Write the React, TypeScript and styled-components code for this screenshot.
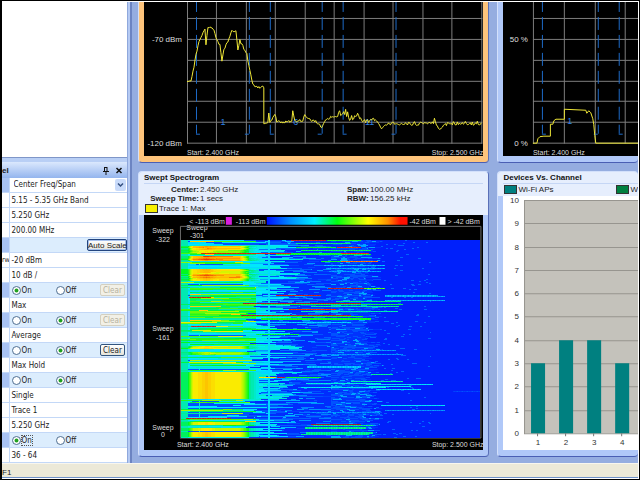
import React from "react";
import styled, { createGlobalStyle, css } from "styled-components";

const GlobalStyle = createGlobalStyle`
  * { box-sizing: border-box; }
  html, body, #root { height: 100%; }
  body {
    margin: 0;
    overflow: hidden;
    background: #000;
    color: #222;
    font-family: "Liberation Sans", Arial, sans-serif;
    font-size: 8px;
  }
`;

/* ---------- Window frame ---------- */

const Screen = styled.div`
  display: flex;
  flex-direction: column;
  height: 100vh;
  padding: 1px 1px 1px 2px;
  background: #000;
`;

const Desktop = styled.div`
  flex: 1;
  min-height: 0;
  display: flex;
  flex-direction: column;
  border-top: 1px solid #fff;
  border-right: 1px solid #fff;
  border-bottom: 1px solid #fff;
  background: #95ade0;
`;

const Workspace = styled.div`
  flex: 1;
  min-height: 0;
  display: flex;
`;

const StatusBar = styled.footer`
  height: 15px;
  padding-top: 3px;
  background: #ece9d8;
  border-top: 1px solid #f8f6ee;
  border-bottom: 1px solid #6d90c8;
  line-height: 12px;
  font-size: 8px;
`;

/* ---------- Control panel ---------- */

const SideBar = styled.aside`
  width: 125px;
  display: flex;
  flex-direction: column;
`;

const EmptyView = styled.div`
  flex: 1;
  background: #fff;
  border-bottom: 1px solid #7f96c8;
`;

const Splitter = styled.div`
  width: 5px;
  background: #b5caf3;
  border-left: 1px solid #8fa8dc;
  border-right: 2px solid #6c84c2;
`;

const PanelBar = styled.header`
  display: flex;
  align-items: center;
  justify-content: space-between;
  height: 20px;
  padding: 1px 4px 0 0;
  border-top: 4px solid #b9cff5;
  background: linear-gradient(#dbe8fd, #94b5ee);
  font-weight: bold;
`;

const BarButtons = styled.div`
  display: flex;
  gap: 5px;
`;

const IconButton = styled.button`
  display: block;
  width: 8px;
  height: 9px;
  padding: 0;
  border: 0;
  background: none;
  svg { display: block; }
`;

const panelFont = css`
  font-family: "DejaVu Sans Condensed", "Noto Sans", sans-serif;
  font-size: 8px;
`;

const PropertyTable = styled.table`
  width: 100%;
  border-collapse: collapse;
  background: #fff;
  table-layout: fixed;
  ${panelFont}
`;

const rowTones = {
  plain: css`background: #fff;`,
  active: css`background: #dcedfd;`,
};

const PropertyRow = styled.tr<{ $tone: "plain" | "active" }>`
  height: 15px;
  ${(p) => rowTones[p.$tone]}
`;

const StubCell = styled.th<{ $filled: boolean }>`
  width: 7px;
  padding: 0;
  overflow: hidden;
  border-bottom: 1px solid #c3d8f7;
  border-right: 1px solid #c3d8f7;
  background: ${(p) => (p.$filled ? "#a9c3f3" : "#fff")};
  font-weight: normal;
  font-size: 7px;
  line-height: 10px;
`;

const ValueCell = styled.td`
  height: 15px;
  padding: 0 0 0 2px;
  border-bottom: 1px solid #c3d8f7;
  line-height: 13px;
  white-space: nowrap;
`;

const Controls = styled.div`
  display: flex;
  align-items: center;
  padding-right: 2px;
  line-height: 13px;
`;

const RadioLabel = styled.label<{ $focused?: boolean }>`
  display: flex;
  flex: none;
  align-items: center;
  gap: 1px;
  width: 44px;
  span { ${(p) => p.$focused && css`outline: 1px dotted #555;`} line-height: 9px; }
`;

const Radio = styled.input`
  appearance: none;
  width: 9px;
  height: 9px;
  margin: 0;
  border: 1px solid #4f6f92;
  border-radius: 50%;
  background: #fff;
  &:checked { background: radial-gradient(circle, #21a121 0 30%, #fff 48%); }
`;

const SmallButton = styled.button`
  height: 12px;
  width: 25px;
  margin-left: auto;
  padding: 0;
  border: 1px solid #33557f;
  border-radius: 2px;
  background: linear-gradient(#fff, #e6e4da);
  color: #222;
  ${panelFont}
  line-height: 9px;
  text-align: center;
  white-space: nowrap;
  &:disabled { border-color: #d4d0c0; background: #f2f0e6; color: #b5b1a0; }
`;

const ScaleButton = styled(SmallButton)`
  width: 40px;
  margin-right: -2px;
  border-color: #23457f;
  box-shadow: inset 0 0 0 1px #a8c2ee;
  font-family: "Liberation Sans", Arial, sans-serif;
`;

const SelectBox = styled.div`
  display: grid;
  grid-template-columns: 1fr 11px;
  align-items: center;
  padding-right: 1px;
`;

const Select = styled.select`
  grid-area: 1 / 1 / 2 / 3;
  appearance: none;
  width: 100%;
  height: 13px;
  padding: 0 0 0 2px;
  border: 0;
  background: #fff;
  color: #222;
  ${panelFont}
`;

const Arrow = styled.svg`
  grid-area: 1 / 2 / 2 / 3;
  pointer-events: none;
  background: #c9dbfa;
  border-radius: 2px;
`;

/* ---------- Measurement panels ---------- */

const Views = styled.main`
  flex: 1;
  min-width: 0;
  display: grid;
  grid-template-columns: minmax(0, 5fr) minmax(0, 2fr);
  grid-template-rows: minmax(0, 161fr) minmax(0, 287fr);
  gap: 8px;
  padding: 0 0 6px 6px;
`;

const Panel = styled.section<{ $selected?: boolean; $place?: "top" | "right" | "corner" }>`
  display: flex;
  flex-direction: column;
  min-width: 0;
  min-height: 0;
  border-style: solid;
  border-width: ${(p) => (p.$place === "top" || p.$place === "corner" ? "0" : "1px")}
    ${(p) => (p.$place === "right" || p.$place === "corner" ? "0" : "1px")} 1px 1px;
  border-color: #d3e0fb #5a70b8 #4a5fb4 #d3e0fb;
  border-radius: ${(p) => (p.$place === "top" || p.$place === "corner" ? "0 0 4px 4px" : "4px")};
  padding: 0 ${(p) => (p.$place === "right" || p.$place === "corner" ? 0 : 5)}px 6px 5px;
  background: ${(p) => (p.$selected ? "#fdc47c" : "#b0c8f8")};
  overflow: hidden;
`;

const PanelHead = styled.header`
  margin: 0 -5px 0 -5px;
  padding: 0 5px;
  background: #e6eefd;
`;

const Title = styled.h2`
  margin: 0;
  height: 12px;
  border-bottom: 1px solid #c5d6f5;
  font-size: 8px;
  line-height: 11px;
  color: #111;
`;

const Readings = styled.dl`
  display: grid;
  grid-template-columns: 55px 148px 22px 1fr;
  margin: 0;
  padding-top: 1px;
  line-height: 9px;
  dt { font-weight: bold; text-align: right; white-space: nowrap; }
  dt:nth-of-type(even) { text-align: left; }
  dd { margin: 0; padding-left: 1px; white-space: nowrap; }
`;

const Legend = styled.ul`
  display: flex;
  align-items: center;
  justify-content: space-between;
  height: 12px;
  margin: 0;
  padding: 0 0 0 1px;
  list-style: none;
`;

const LegendItem = styled.li<{ $color: string }>`
  display: flex;
  align-items: center;
  gap: 1px;
  white-space: nowrap;
  &::before {
    content: "";
    width: 11px;
    height: 7px;
    border: 1px solid #333;
    background: ${(p) => p.$color};
  }
`;

const Chart = styled.svg<{ $light?: boolean }>`
  display: block;
  flex: 1;
  width: 100%;
  min-height: 0;
  background: ${(p) => (p.$light ? "#fff" : "#000")};
  font-family: "Liberation Sans", Arial, sans-serif;
  font-size: 8px;
  fill: #dedede;
`;

/* ---------- Chart data ---------- */

const makeRandom = (seed: number) => () => {
  seed = (seed * 1664525 + 1013904223) >>> 0;
  return seed / 4294967296;
};

const gridRows = [18, 39, 60, 81, 101, 122, 143];

const noisyTrace = (knots: [number, number, number][]) => {
  const rnd = makeRandom(11);
  let d = "";
  for (let i = 0; i < knots.length - 1; i++) {
    const [x0, y0, noise] = knots[i];
    const [x1, y1] = knots[i + 1];
    for (let x = x0; x < x1; x += 1) {
      const y = y0 + ((y1 - y0) * (x - x0)) / (x1 - x0) + (rnd() - 0.5) * noise;
      d += `${d ? "L" : "M"}${x} ${y.toFixed(1)}`;
    }
    if (x0 === x1) d += `L${x0} ${y0}`;
  }
  const last = knots[knots.length - 1];
  return `${d}L${last[0]} ${last[1]}`;
};

const powerTrace = noisyTrace([
  [187, 82, 0.6], [191, 81, 1], [194, 67, 2], [196, 55, 2], [199, 42, 2], [203, 33, 3], [205, 29, 1],
  [206, 45, 1], [208, 27, 2], [213, 29, 3], [217, 39, 3], [220, 45, 1], [222, 61, 1], [224, 50, 2],
  [228, 41, 3], [231, 32, 4], [236, 31, 2], [238, 50, 1], [240, 41, 3], [244, 49, 3], [247, 54, 2],
  [249, 66, 1], [253, 85, 3], [258, 88, 4], [264, 88, 0], [264, 124, 0], [268, 123, 1], [269, 113, 1],
  [270, 123, 2], [275, 114, 2], [277, 122, 3], [292, 122, 2], [293, 111, 1], [295, 121, 3], [303, 121, 2],
  [305, 115, 1], [308, 120, 3], [316, 121, 3], [322, 128, 1], [326, 120, 5], [331, 118, 6], [337, 115, 8],
  [346, 113, 8], [351, 118, 5], [357, 117, 3], [358, 113, 1], [360, 119, 4], [366, 122, 3], [374, 120, 4],
  [379, 124, 1], [382, 129, 1], [387, 124, 3], [410, 124, 4], [434, 123, 2], [435, 119, 1], [437, 125, 1],
  [440, 130, 1], [446, 124, 4], [462, 123, 4], [471, 124, 4], [482, 123, 0],
]);

const WIDTH = 300;
const HEIGHT = 198;

const heat: [number, number[]][] = [
  [0, [0, 26, 250]], [0.12, [0, 62, 255]], [0.22, [0, 140, 255]], [0.33, [0, 232, 255]],
  [0.42, [0, 235, 150]], [0.5, [0, 250, 30]], [0.6, [165, 250, 0]], [0.68, [250, 240, 0]],
  [0.8, [255, 165, 0]], [0.9, [230, 50, 10]], [1, [150, 25, 60]],
];

const heatColor = (v: number) => {
  const i = Math.max(1, heat.findIndex(([s]) => s >= v));
  const [s0, a] = heat[i - 1];
  const [s1, b] = heat[i];
  const t = (v - s0) / (s1 - s0);
  return `rgb(${a.map((c, k) => Math.round(c + (b[k] - c) * t)).join(",")})`;
};

/* Sweeps with strong activity: first row, last row, level of the busy band. */
const bursts: [number, number, number][] = [
  [6, 9, 0.76], [10, 12, 0.62], [16, 20, 0.8], [29, 33, 0.7], [34, 37, 0.8], [38, 40, 0.7],
  [106, 108, 0.68], [112, 114, 0.6], [132, 158, 0.7], [182, 184, 0.66], [188, 190, 0.64], [192, 196, 0.7],
];

/* Single streaks: row, start, end, level, thickness. */
const streaks: [number, number, number, number, number][] = [
  [0, 110, 145, 0.95, 1], [0, 146, 180, 0.5, 1], [3, 115, 170, 0.44, 1], [7, 115, 155, 0.5, 1],
  [7, 156, 180, 0.9, 1], [10, 120, 190, 0.45, 1], [13, 20, 110, 0.92, 1], [13, 110, 160, 0.5, 1],
  [14, 95, 190, 0.48, 1], [13, 160, 188, 0.9, 1], [21, 140, 160, 0.5, 1], [21, 160, 197, 0.84, 1],
  [25, 143, 204, 0.28, 1], [28, 145, 204, 0.26, 1], [31, 148, 200, 0.24, 1], [48, 147, 183, 0.95, 1],
  [48, 183, 204, 0.55, 1], [55, 204, 258, 0.26, 1], [56, 204, 265, 0.24, 1], [60, 204, 265, 0.26, 1],
  [55, 95, 140, 0.95, 1], [57, 8, 30, 0.95, 1], [61, 155, 220, 0.44, 1], [63, 62, 180, 0.98, 1],
  [64, 80, 222, 0.46, 1], [66, 130, 218, 0.42, 1], [69, 108, 155, 0.9, 1], [71, 120, 217, 0.4, 1],
  [75, 60, 170, 0.97, 1], [76, 60, 182, 0.5, 1], [78, 80, 190, 0.5, 2], [82, 85, 170, 0.3, 1],
  [89, 60, 130, 0.5, 1], [94, 75, 118, 0.48, 1], [86, 10, 35, 0.93, 1], [110, 157, 215, 0.22, 1],
  [114, 140, 222, 0.22, 1], [126, 126, 180, 0.28, 2], [137, 78, 95, 0.7, 1], [137, 96, 104, 0.95, 1],
  [137, 105, 140, 0.5, 1], [144, 185, 252, 0.32, 1], [149, 195, 240, 0.3, 1], [141, 170, 222, 0.4, 1],
  [146, 188, 230, 0.34, 1], [134, 190, 212, 0.42, 1], [143, 125, 200, 0.36, 1], [147, 120, 205, 0.34, 1],
  [151, 273, 300, 0.12, 1], [165, 200, 265, 0.32, 1], [170, 204, 265, 0.22, 1], [172, 130, 198, 0.22, 1],
  [178, 5, 50, 0.95, 1], [184, 130, 180, 1, 1], [185, 132, 192, 0.43, 1], [187, 124, 185, 0.43, 2],
  [192, 125, 192, 0.42, 2], [194, 120, 188, 0.43, 1],
];

const buildSpectrogram = () => {
  const rnd = makeRandom(42);
  const paths = new Map<number, string>();
  for (let y = 0; y < HEIGHT; y++) {
    const burst = bursts.find(([a, b]) => y >= a && y <= b);
    const busy = (y > 54 && y < 82) || rnd() < 0.22;
    const sparse = y < 5 || (y > 160 && y < 182);
    const rowTone = rnd();
    const rowLift = (rnd() - 0.5) * 0.16;
    const reach = (burst ? 76 : 64) + rnd() * 46;
    const tail = 182 + rnd() * 20;
    const row: number[] = [];
    let jitter = 0;
    let left = 0;
    for (let x = 0; x < WIDTH; x++) {
      if (left-- <= 0) {
        jitter = rnd();
        left = x < 90 ? 6 + rnd() * 36 : x < 150 ? 1 + rnd() * 14 : x < 200 ? rnd() * 5 : rnd() * 2;
      }
      let v: number;
      if (burst && x < 78) {
        const top = burst[2] - 0.02;
        v = x < 6 ? 0.46 : x < 12 ? 0.46 + ((x - 6) / 6) * (top - 0.46)
          : x < 58 ? top : x < 68 ? top - ((x - 58) / 10) * (top - 0.48) : 0.42 - (x - 68) * 0.008;
        if (x > 14 && x < 36) v += 0.07 * (1 - Math.abs(x - 25) / 11);
        if (y < 120) v += (jitter - 0.5) * 0.1;
      } else if (x < reach) {
        v = 0.34 + (jitter - 0.5) * 0.07;
        if (busy && x > 8 && x < 75) v = jitter > 0.95 ? 0.72 : 0.44 + rowLift + jitter * 0.12;
        else if (rowTone > 0.78 && x < 62) v = 0.4 + jitter * 0.28;
        else if ((sparse || rowTone < 0.14) && jitter > 0.45) v = 0.14;
        if (x < 7) v = Math.max(v, 0.4);
      } else if (x < 150) {
        const fade = Math.max(0, 1 - (x - 62) / 84);
        v = jitter < 0.3 + fade * 0.4 ? 0.12 + jitter * 0.34 : 0.07;
      } else if (x < tail) {
        v = jitter > 0.9 ? 0.24 : jitter > 0.5 ? 0.15 : 0.08;
      } else {
        v = jitter > 0.965 && x < 250 ? 0.16 : 0.02;
      }
      if (x === 18 && v < 0.4) v = 0.36;
      if (x === 87 || x === 88) v = 0.32;
      row.push(v);
    }
    for (const [sy, a, b, level, size] of streaks) {
      if (y >= sy && y < sy + size) {
        for (let x = a; x < b; x++) row[x] = Math.min(1, level + (((x * 7) % 5) - 2) * 0.012);
      }
    }
    let start = 0;
    for (let x = 1; x <= WIDTH; x++) {
      const level = Math.round(row[start] * 48);
      if (x === WIDTH || Math.round(row[x] * 48) !== level) {
        paths.set(level, `${paths.get(level) ?? ""}M${start} ${y}h${x - start}v1h${start - x}z`);
        start = x;
      }
    }
  }
  return [...paths.entries()];
};

const spectrogram = buildSpectrogram();

const ChannelMark = ({ x, foot }: { x: number; foot: number }) => (
  <g stroke="#1d6ac8" fill="none">
    <path d={`M${x + 0.5} 2V134`} strokeDasharray="13 5" strokeDashoffset="3" />
    <path d={`M${x} 134.5h${foot}`} />
  </g>
);

const Grid = ({ xs, left, right }: { xs: number[]; left: number; right: number }) => (
  <path
    fill="none"
    stroke="#7d7d7d"
    d={xs.map((x) => `M${x + 0.5} 2V144`).join("") + gridRows.map((y) => `M${left} ${y + 0.5}H${right}`).join("")}
  />
);

const PowerChart = () => (
  <Chart viewBox="144 2 340 154" role="img" aria-label="Power spectrum">
    <Grid xs={[187, 216, 246, 275, 305, 334, 364, 393, 423, 452, 482]} left={187} right={483} />
    <ChannelMark x={196} foot={4} />
    <ChannelMark x={249} foot={-4} />
    <ChannelMark x={270} foot={4} />
    <ChannelMark x={322} foot={-4} />
    <ChannelMark x={343} foot={4} />
    <ChannelMark x={396} foot={-4} />
    <g fill="#2a7fe0" fontSize="9" textAnchor="middle">
      <text x="223" y="125">1</text>
      <text x="296" y="125">6</text>
      <text x="370" y="125">11</text>
    </g>
    <path d={powerTrace} fill="none" stroke="#f0e838" />
    <g textAnchor="end">
      <text x="182" y="42">-70 dBm</text>
      <text x="182" y="146">-120 dBm</text>
      <text x="484" y="155" fontSize="7">Stop: 2.500 GHz</text>
    </g>
    <text x="187" y="155" fontSize="7">Start: 2.400 GHz</text>
  </Chart>
);

const DutyChart = () => (
  <Chart viewBox="504 2 133 154" preserveAspectRatio="xMinYMid meet" role="img" aria-label="Duty cycle">
    <Grid xs={[534, 565, 596, 626]} left={534} right={640} />
    <ChannelMark x={543} foot={4} />
    <ChannelMark x={599} foot={-4} />
    <ChannelMark x={620} foot={4} />
    <text x="571" y="124" fill="#2a7fe0" fontSize="9" textAnchor="middle">1</text>
    <path
      d="M534 143.500H538L539 139L541 137L545 136.500H551.500V124.500H554L555 121L557 119.500H565.500V109.500L587 110.500L588 113.500L590 111L592 113L594 119L595 125L596 136L597 143.500H640"
      fill="none"
      stroke="#f0e838"
    />
    <g textAnchor="end">
      <text x="529" y="42">50 %</text>
      <text x="529" y="146">0 %</text>
    </g>
    <text x="534" y="155" fontSize="7">Start: 2.400 GHz</text>
  </Chart>
);

const SpectrogramChart = () => (
  <Chart viewBox="144 215 340 234" role="img" aria-label="Swept spectrogram">
    <defs>
      <linearGradient id="scale">
        <stop offset="0" stopColor="#0010ff" />
        <stop offset="0.17" stopColor="#0090ff" />
        <stop offset="0.34" stopColor="#00eeff" />
        <stop offset="0.5" stopColor="#00ff10" />
        <stop offset="0.72" stopColor="#ffff00" />
        <stop offset="0.86" stopColor="#ff9000" />
        <stop offset="0.95" stopColor="#ff1000" />
      </linearGradient>
      <clipPath id="plot">
        <path d="M181 224H481V240H181z" />
      </clipPath>
    </defs>
    <g fontSize="7">
      <text x="225" y="223" textAnchor="end">{"< -113 dBm"}</text>
      <text x="236" y="223">-113 dBm</text>
      <text x="410" y="223">-42 dBm</text>
      <text x="448" y="223">{"> -42 dBm"}</text>
    </g>
    <path d="M226 216h6v8h-6z" fill="#d81ee0" />
    <path d="M440 216h6v8h-6z" fill="#fff" />
    <path d="M267 216h141v8h-141z" fill="url(#scale)" />
    <g clipPath="url(#plot)" fontSize="7" textAnchor="middle">
      <text x="197" y="229">Sweep</text>
      <text x="197" y="237">-301</text>
    </g>
    <path d="M180.500 437V225.500H481.500V437.500H180" fill="none" stroke="#6c6c6c" />
    <g transform="translate(181 239)" shapeRendering="crispEdges">
      {spectrogram.map(([level, d]) => (
        <path key={level} d={d} fill={heatColor(level / 48)} />
      ))}
    </g>
    <g fontSize="7" textAnchor="middle">
      <text x="163" y="232">Sweep</text>
      <text x="163" y="241">-322</text>
      <text x="163" y="330">Sweep</text>
      <text x="163" y="339">-161</text>
      <text x="163" y="429">Sweep</text>
      <text x="163" y="437">0</text>
    </g>
    <text x="177" y="447" fontSize="7">Start: 2.400 GHz</text>
    <text x="484" y="447" fontSize="7" textAnchor="end">Stop: 2.500 GHz</text>
  </Chart>
);

const deviceCounts = [3, 4, 4, 3];
const valueToY = (v: number) => 432 - Math.round(v * 23.3);

const DevicesChart = () => (
  <Chart $light viewBox="504 195 133 254" preserveAspectRatio="xMinYMid meet" role="img" aria-label="Devices per channel">
    <path d="M525 199H640V432H525z" fill="#c4c2bb" />
    <path
      d={Array.from({ length: 11 }, (_, v) => `M525 ${valueToY(v) + 0.5}H640`).join("") + "M525.500 199V433"}
      fill="none"
      stroke="#97958f"
    />
    {deviceCounts.map((n, i) => (
      <React.Fragment key={i}>
        <path d={`M${532 + i * 28} ${valueToY(n)}h14V432h-14z`} fill="#008080" />
        <path d={`M${538.5 + i * 28} 432v3`} stroke="#777" />
        <text x={539 + i * 28} y="444" fill="#333" textAnchor="middle">{i + 1}</text>
      </React.Fragment>
    ))}
    {Array.from({ length: 11 }, (_, v) => (
      <text key={v} x="520" y={valueToY(v) + 3} fill="#333" textAnchor="end">{v}</text>
    ))}
  </Chart>
);

/* ---------- Property rows ---------- */

type SwitchProps = { name: string; on: boolean; clear?: "enabled" | "disabled"; focused?: boolean };

const SwitchRow = ({ name, on, clear, focused }: SwitchProps) => (
  <PropertyRow $tone="active">
    <StubCell $filled />
    <ValueCell>
      <Controls role="radiogroup" aria-label={name}>
        <RadioLabel $focused={focused}>
          <Radio type="radio" name={name} defaultChecked={on} />
          <span>On</span>
        </RadioLabel>
        <RadioLabel>
          <Radio type="radio" name={name} defaultChecked={!on} />
          <span>Off</span>
        </RadioLabel>
        {clear && <SmallButton disabled={clear === "disabled"}>Clear</SmallButton>}
      </Controls>
    </ValueCell>
  </PropertyRow>
);

const TextRow = ({ value, stub }: { value: string; stub?: string }) => (
  <PropertyRow $tone="plain">
    <StubCell $filled={false}>{stub}</StubCell>
    <ValueCell>{value}</ValueCell>
  </PropertyRow>
);

const ControlPanel = () => (
  <SideBar>
    <EmptyView />
    <PanelBar>
      <span>el</span>
      <BarButtons>
        <IconButton aria-label="Pin">
          <svg width="8" height="9" fill="none" stroke="#111">
            <path d="M2.500 1V5M2 1.500H5M5 1V5M1 5.500H7M4 5V9" />
          </svg>
        </IconButton>
        <IconButton aria-label="Close">
          <svg width="8" height="9" fill="none" stroke="#111" strokeWidth="1.500">
            <path d="M1.500 2L6.500 7M6.500 2L1.500 7" />
          </svg>
        </IconButton>
      </BarButtons>
    </PanelBar>
    <PropertyTable>
      <tbody>
        <PropertyRow $tone="plain">
          <StubCell $filled />
          <ValueCell>
            <SelectBox>
              <Select aria-label="Frequency mode">
                <option>Center Freq/Span</option>
              </Select>
              <Arrow width="11" height="12" fill="none" stroke="#35507f" strokeWidth="1.500">
                <path d="M3 4.500L5.500 7L8 4.500" />
              </Arrow>
            </SelectBox>
          </ValueCell>
        </PropertyRow>
        <TextRow value="5.15 - 5.35 GHz Band" />
        <TextRow value="5.250 GHz" />
        <TextRow value="200.00 MHz" />
        <PropertyRow $tone="active">
          <StubCell $filled />
          <ValueCell>
            <Controls>
              <ScaleButton>Auto Scale</ScaleButton>
            </Controls>
          </ValueCell>
        </PropertyRow>
        <TextRow value="-20 dBm" stub="rw" />
        <TextRow value="10 dB /" />
        <SwitchRow name="max" on clear="disabled" />
        <TextRow value="Max" />
        <SwitchRow name="average" on={false} clear="disabled" />
        <TextRow value="Average" />
        <SwitchRow name="max-hold" on={false} clear="enabled" />
        <TextRow value="Max Hold" />
        <SwitchRow name="single" on={false} />
        <TextRow value="Single" />
        <TextRow value="Trace 1" />
        <TextRow value="5.250 GHz" />
        <SwitchRow name="marker" on focused />
        <TextRow value="36 - 64" />
      </tbody>
    </PropertyTable>
  </SideBar>
);

export default function App() {
  return (
    <>
      <GlobalStyle />
      <Screen>
        <Desktop>
          <Workspace>
            <ControlPanel />
            <Splitter />
            <Views>
              <Panel $selected $place="top">
                <PowerChart />
              </Panel>
              <Panel $place="corner">
                <DutyChart />
              </Panel>
              <Panel>
                <PanelHead>
                  <Title>Swept Spectrogram</Title>
                  <Readings>
                    <dt>Center:</dt>
                    <dd>2.450 GHz</dd>
                    <dt>Span:</dt>
                    <dd>100.00 MHz</dd>
                    <dt>Sweep Time:</dt>
                    <dd>1 secs</dd>
                    <dt>RBW:</dt>
                    <dd>156.25 kHz</dd>
                  </Readings>
                  <Legend>
                    <LegendItem $color="#f8f000">Trace 1: Max</LegendItem>
                  </Legend>
                </PanelHead>
                <SpectrogramChart />
              </Panel>
              <Panel $place="right">
                <PanelHead>
                  <Title>Devices Vs. Channel</Title>
                  <Legend>
                    <LegendItem $color="#008080">Wi-Fi APs</LegendItem>
                    <LegendItem $color="#008040">W</LegendItem>
                  </Legend>
                </PanelHead>
                <DevicesChart />
              </Panel>
            </Views>
          </Workspace>
          <StatusBar>F1</StatusBar>
        </Desktop>
      </Screen>
    </>
  );
}
